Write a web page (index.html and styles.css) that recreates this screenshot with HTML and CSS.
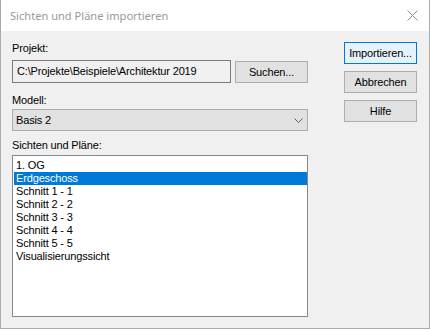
FILE: index.html
```html
<!DOCTYPE html>
<html lang="de">
<head>
<meta charset="utf-8">
<title>Sichten und Pläne importieren</title>
<link rel="stylesheet" href="styles.css">
</head>
<body>
<div class="window">
  <div class="titlebar">
    <span class="title">Sichten und Pläne importieren</span>
    <svg class="close" width="11" height="11" viewBox="0 0 11 11"><path d="M0.5 0.5 L10.5 10.5 M10.5 0.5 L0.5 10.5" stroke="#8c8c8c" stroke-width="1" fill="none"/></svg>
  </div>
  <div class="content">
    <div class="left">
      <div class="label">Projekt:</div>
      <div class="path-row">
        <div class="textbox">C:\Projekte\Beispiele\Architektur 2019</div>
        <div class="btn">Suchen...</div>
      </div>
      <div class="label label-modell">Modell:</div>
      <div class="combo">
        <span>Basis 2</span>
        <svg class="chev" width="9" height="5" viewBox="0 0 9 5"><path d="M0.5 0.5 L4.5 4.5 L8.5 0.5" stroke="#606060" stroke-width="1" fill="none"/></svg>
      </div>
      <div class="label label-list">Sichten und Pläne:</div>
      <div class="listbox">
        <div class="item">1. OG</div>
        <div class="item selected">Erdgeschoss</div>
        <div class="item">Schnitt 1 - 1</div>
        <div class="item">Schnitt 2 - 2</div>
        <div class="item">Schnitt 3 - 3</div>
        <div class="item">Schnitt 4 - 4</div>
        <div class="item">Schnitt 5 - 5</div>
        <div class="item">Visualisierungssicht</div>
      </div>
    </div>
    <div class="right">
      <div class="btn btn-default">Importieren...</div>
      <div class="btn">Abbrechen</div>
      <div class="btn">Hilfe</div>
    </div>
  </div>
</div>
</body>
</html>
```

FILE: styles.css
```css
html, body {
  margin: 0;
  padding: 0;
  background: #f0f0f0;
}
.window {
  box-sizing: border-box;
  width: 430px;
  height: 329px;
  border: 1px solid #aaaaaa;
  border-top: none;
  background: #f0f0f0;
  font-family: "Liberation Sans", Arial, sans-serif;
  font-size: 11px;
  letter-spacing: -0.15px;
  color: #000;
}
.titlebar {
  height: 31px;
  background: #fff;
  display: flex;
  align-items: center;
  justify-content: space-between;
  padding: 0 11px 0 9px;
}
.title {
  font-family: "Noto Sans", "Open Sans", sans-serif;
  font-size: 11.1px;
  letter-spacing: 0;
  color: #999999;
  margin-top: -1px;
}
.close {
  display: block;
  margin-top: -1px;
}
.content {
  display: flex;
  padding: 11px 0 0 11px;
}
.left {
  width: 296px;
  display: flex;
  flex-direction: column;
}
.label {
  height: 13px;
  line-height: 13px;
}
.path-row {
  display: flex;
  justify-content: space-between;
  align-items: flex-end;
  height: 23px;
  margin-top: 5px;
}
.textbox {
  box-sizing: border-box;
  width: 219px;
  height: 23px;
  border: 1px solid #7a7a7a;
  background: #f0f0f0;
  padding-left: 4px;
  line-height: 21px;
  white-space: nowrap;
}
.btn {
  box-sizing: border-box;
  width: 73px;
  height: 22px;
  border: 1px solid #adadad;
  background: #e1e1e1;
  text-align: center;
  line-height: 20px;
  white-space: nowrap;
}
.btn-default {
  border-color: #0078d7;
  background: #e5f1fb;
}
.label-modell {
  margin-top: 11px;
}
.combo {
  box-sizing: border-box;
  height: 22px;
  margin-top: 2px;
  border: 1px solid #adadad;
  background: #e1e1e1;
  display: flex;
  align-items: center;
  justify-content: space-between;
  padding: 0 4px 0 3px;
}
.chev {
  display: block;
}
.label-list {
  margin-top: 8px;
}
.listbox {
  box-sizing: border-box;
  height: 162px;
  margin-top: 3px;
  border: 1px solid #828790;
  background: #fff;
  padding: 3px 0 0 1px;
}
.item {
  height: 13px;
  line-height: 13px;
  padding-left: 2px;
  white-space: nowrap;
}
.selected {
  background: #0078d7;
  color: #fff;
}
.right {
  margin-left: 36px;
  display: flex;
  flex-direction: column;
  gap: 7px;
}
```
